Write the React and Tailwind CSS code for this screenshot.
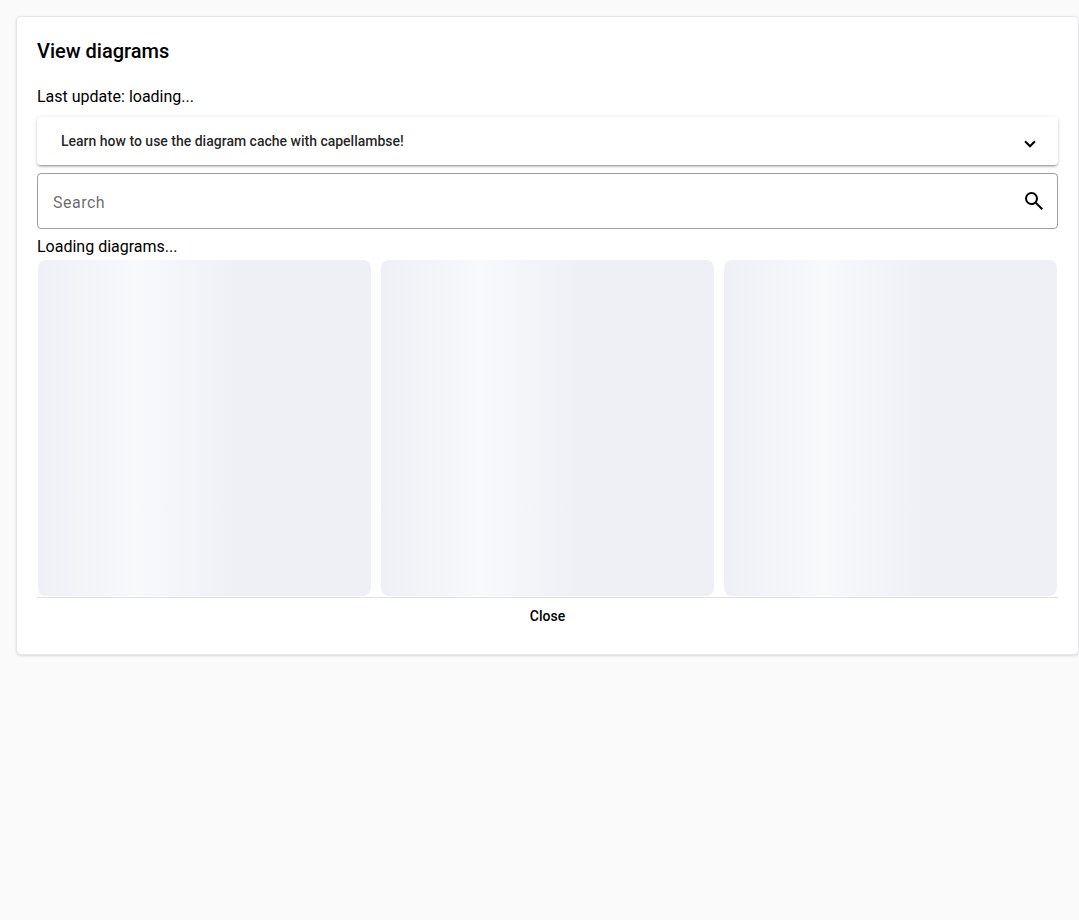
function Skeleton() {
  return (
    <div className="h-[336px] w-[333px] rounded-lg bg-[linear-gradient(90deg,#eff0f6_0%,#f8f9fb_30%,#eff0f6_60%)]" />
  );
}

export default function App() {
  return (
    <div className="min-h-screen bg-[#fafafa] pl-4 pt-4 text-base leading-6 text-black [font-family:Roboto,sans-serif]">
      <main className="flex h-[639px] w-[1063px] flex-col rounded-[5px] border border-[#e5e7eb] bg-white px-5 pt-5 shadow">
        <h2 className="h-8 text-xl font-medium leading-7">View diagrams</h2>
        <p className="mt-4 h-6">Last update: loading...</p>
        <button className="mt-2 flex h-12 shrink-0 items-center justify-between rounded px-6 text-left text-sm font-medium text-black/87 shadow-[0_3px_1px_-2px_rgba(0,0,0,0.2),0_2px_2px_0_rgba(0,0,0,0.14),0_1px_5px_0_rgba(0,0,0,0.12)]">
          <span>Learn how to use the diagram cache with capellambse!</span>
          <svg className="-mr-0.5 mt-1.5 h-2 w-3" viewBox="0 0 12 8" fill="none" stroke="black" strokeWidth="2"><path d="M1.05 1.29 6 6.24l4.95-4.95" /></svg>
        </button>
        <label className="mt-2 flex h-14 shrink-0 items-center justify-between rounded border border-black/38 px-[15px]">
          <input className="mt-1 w-80 tracking-[0.5px] outline-none placeholder:text-black/60" placeholder="Search" />
          <svg className="-mr-1 h-6 w-6" viewBox="0 -960 960 960"><path d="M784-120 532-372q-30 24-69 38t-83 14q-109 0-184.5-75.5T120-580q0-109 75.5-184.5T380-840q109 0 184.5 75.5T640-580q0 44-14 83t-38 69l252 252-56 56ZM380-400q75 0 127.5-52.5T560-580q0-75-52.5-127.5T380-760q-75 0-127.5 52.5T200-580q0 75 52.5 127.5T380-400Z" /></svg>
        </label>
        <p className="mt-1.5 h-[25px] shrink-0">Loading diagrams...</p>
        <div className="flex shrink-0 justify-between px-px"><Skeleton /><Skeleton /><Skeleton /></div>
        <div className="mt-px flex justify-center border-t border-black/12">
          <button className="h-9 px-2 text-sm font-medium">Close</button>
        </div>
      </main>
    </div>
  );
}
